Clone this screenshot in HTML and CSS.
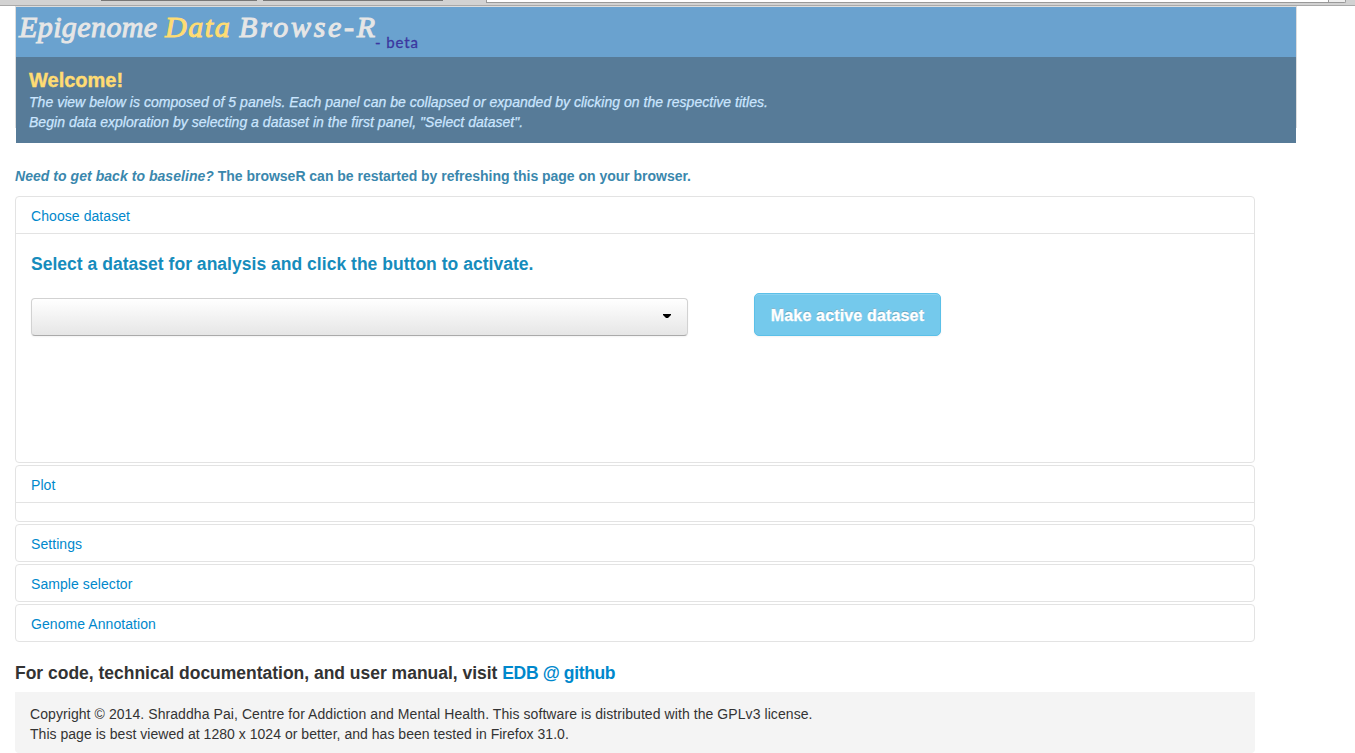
FILE: index.html
```html
<!DOCTYPE html>
<html lang="en">
<head>
<meta charset="utf-8">
<title>Epigenome Data Browse-R</title>
<link rel="stylesheet" href="styles.css">
</head>
<body>
<div class="toolbar">
  <div class="tab tab-first"></div>
  <div class="tab tab-second"></div>
  <div class="address"><div class="address-end"></div></div>
</div>
<header class="banner">
  <div class="brand">
    <span class="brand-word epigenome">Epigenome</span>
    <span class="brand-word data">Data</span>
    <span class="brand-word browser">Browse-R</span>
    <span class="beta">- beta</span>
  </div>
  <div class="welcome">
    <h1 class="welcome-title">Welcome!</h1>
    <p class="welcome-text">The view below is composed of 5 panels. Each panel can be collapsed or expanded by clicking on the respective titles.</p>
    <p class="welcome-text">Begin data exploration by selecting a dataset in the first panel, "Select dataset".</p>
  </div>
</header>
<main class="content">
  <p class="notice"><em class="notice-lead">Need to get back to baseline?</em> <span class="notice-rest">The browseR can be restarted by refreshing this page on your browser.</span></p>
  <section class="panel">
    <a class="panel-title">Choose dataset</a>
    <div class="panel-body dataset">
      <h2 class="prompt">Select a dataset for analysis and click the button to activate.</h2>
      <div class="controls">
        <div class="select"><svg class="caret" width="8" height="5" viewBox="0 0 8 5"><path d="M0 0h8v1L5 4H3L0 1z"/></svg></div>
        <button class="activate">Make active dataset</button>
      </div>
    </div>
  </section>
  <section class="panel">
    <a class="panel-title">Plot</a>
    <div class="panel-body plot"></div>
  </section>
  <section class="panel"><a class="panel-title">Settings</a></section>
  <section class="panel"><a class="panel-title">Sample selector</a></section>
  <section class="panel"><a class="panel-title">Genome Annotation</a></section>
  <h3 class="docs">For code, technical documentation, and user manual, visit <a class="docs-link">EDB @ github</a></h3>
  <footer class="footer">
    <p class="copyright">Copyright © 2014. Shraddha Pai, Centre for Addiction and Mental Health. This software is distributed with the GPLv3 license.</p>
    <p class="support">This page is best viewed at 1280 x 1024 or better, and has been tested in Firefox 31.0.</p>
  </footer>
</main>
</body>
</html>
```
FILE: styles.css
```css
* { box-sizing: border-box; }
body { margin: 0; height: 753px; overflow: hidden; background: #fff; color: #333; font: 14px/20px "Liberation Sans", Arial, sans-serif; }
h1, h2, h3, p { margin: 0; white-space: nowrap; }
.toolbar { display: flex; height: 6px; background: #d2d2d2; border-bottom: 1px solid #a9a9a9; }
.tab { height: 1px; background: #777; }
.tab-first { margin-left: 101px; width: 156px; }
.tab-second { margin-left: 6px; width: 180px; }
.address { display: flex; justify-content: flex-end; margin-left: 43px; width: 860px; height: 3px; background: #fff; border: solid #999; border-width: 0 1px 1px; border-bottom-right-radius: 2px; }
.address-end { width: 17px; background: #eee; border-left: 1px solid #999; }
.banner { margin-left: 15px; width: 1282px; height: 137px; padding: 1px 1px 0; background: linear-gradient(#ddd, #ddd) 0 0 / 100% 122px no-repeat; }
.brand { display: flex; height: 50px; padding-left: 3px; background: #6aa2cf; white-space: nowrap; }
.brand-word { height: 50px; font: italic 400 30px/40px "Liberation Serif", serif; color: #e6e6e6; -webkit-text-stroke: 1px; }
.epigenome { width: 146px; letter-spacing: .4px; }
.data { width: 74px; color: #ffdc73; letter-spacing: 1.6px; }
.browser { width: 136px; letter-spacing: 2.7px; }
.beta { height: 50px; font: 15px/71px Lato, sans-serif; color: #3b37a0; letter-spacing: .9px; -webkit-text-stroke: .3px; }
.welcome { height: 86px; padding: 12px 0 0 13px; background: #577b98; }
.welcome-title { margin-bottom: 1px; font-size: 20px; line-height: 22px; color: #ffdc73; -webkit-text-stroke: .4px; }
.welcome-text { font-style: italic; color: #cbe6ff; letter-spacing: .03px; -webkit-text-stroke: .25px; }
.content { margin-left: 15px; width: 1240px; padding-top: 23px; }
.notice { margin-bottom: 10px; font-weight: 700; color: #3a87ad; }
.notice-lead { letter-spacing: .045px; }
.notice-rest { letter-spacing: -.02px; }
.panel { margin-bottom: 2px; border: 1px solid #e3e3e3; border-radius: 4px; }
.panel-title { display: block; height: 36px; padding: 9px 15px 7px; color: #08c; letter-spacing: .07px; }
.panel-body { border-top: 1px solid #e3e3e3; }
.dataset { height: 229px; padding: 20px 15px; }
.plot { height: 19px; }
.prompt { font-size: 17.5px; line-height: 20px; color: #168cbc; letter-spacing: .025px; }
.controls { display: flex; align-items: flex-end; gap: 66px; margin-top: 19px; }
.select { display: flex; align-items: center; justify-content: flex-end; width: 657px; height: 38px; padding: 0 16px 1px 0; border: 1px solid #d2d2d2; border-bottom-color: #aaa; border-radius: 4px; background: linear-gradient(#fff, #e6e6e6); box-shadow: 0 1px 2px rgba(0,0,0,.05); }
.activate { width: 187px; height: 43px; padding: 2px 0 0; border: 1px solid #5bc0e8; border-radius: 5px; background: #74c9ec; box-shadow: inset 0 1px #8bd3f1, 0 1px 2px rgba(0,0,0,.05); color: #fff; font: 700 16px "Liberation Sans", Arial, sans-serif; letter-spacing: .16px; text-shadow: 0 -1px rgba(0,0,0,.25); -webkit-text-stroke: .3px; }
.docs { margin-top: 21px; font-size: 17.5px; line-height: 20px; letter-spacing: -.015px; }
.docs-link { color: #08c; letter-spacing: -.36px; }
.footer { height: 61px; margin-top: 9px; padding: 12px 15px 0; background: #f4f4f4; border-radius: 0 0 4px 4px; }
.copyright { letter-spacing: .073px; }
.support { letter-spacing: .03px; }
```
